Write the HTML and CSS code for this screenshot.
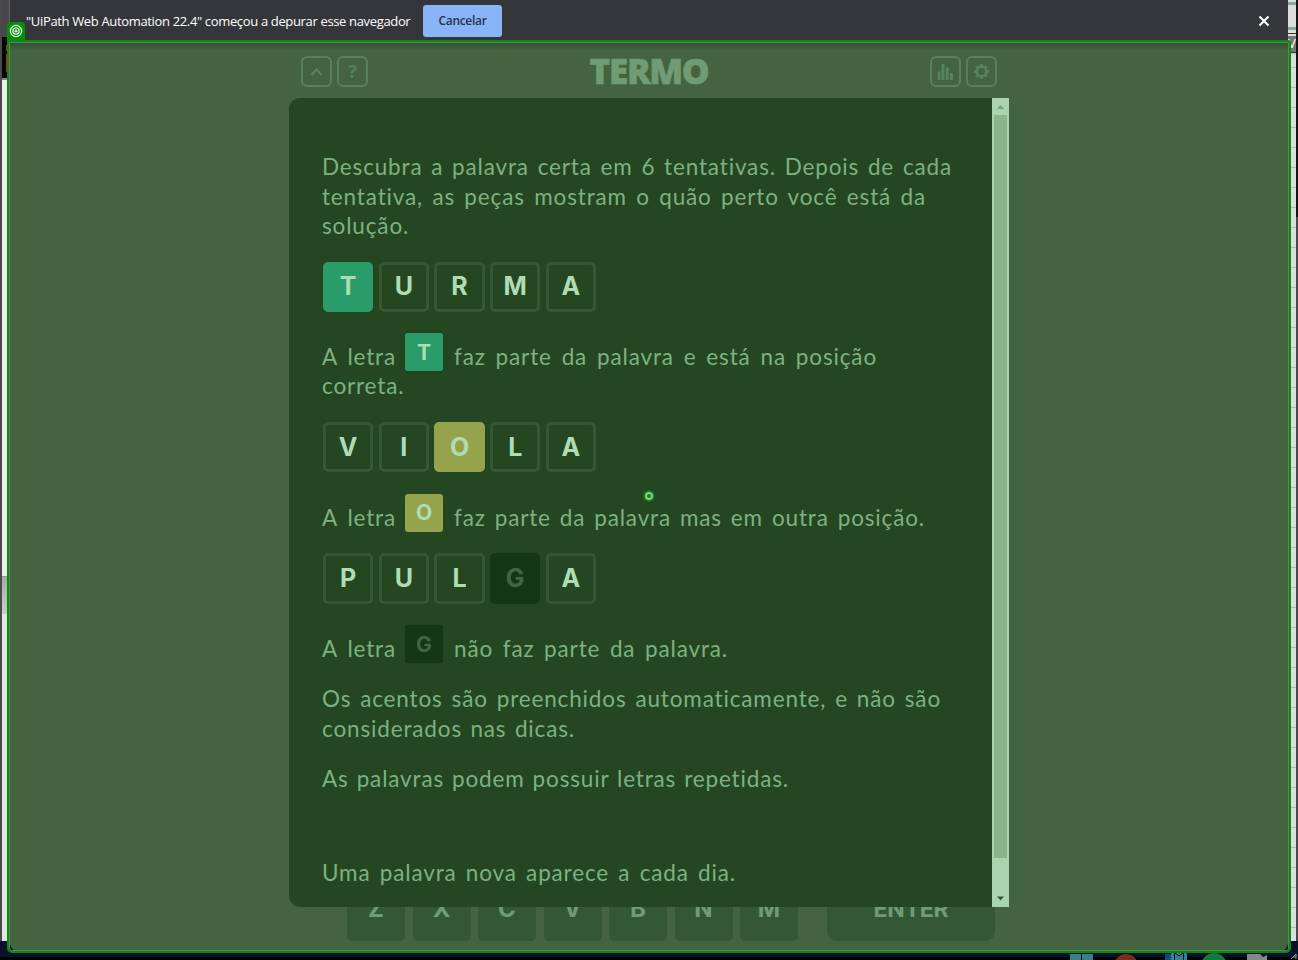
FILE: index.html
```
<!DOCTYPE html>
<html lang="pt-BR">
<head>
<meta charset="utf-8">
<title>Termo</title>
<link rel="stylesheet" href="styles.css">
</head>
<body>
<div class="desktop">
  <div class="middle">
    <div class="edge-left">
      <div class="el-top"></div><div class="el-dark"><i></i><i></i></div><div class="el-light"></div><div class="el-shade"></div><div class="el-rest"></div>
    </div>
    <main class="window">
      <div class="infobar">
        <span class="info-text">"UiPath Web Automation 22.4" começou a depurar esse navegador</span>
        <button class="cancel">Cancelar</button>
        <svg class="close" viewBox="0 0 12 12"><path d="M1.5 1.5l9 9M10.5 1.5l-9 9"/></svg>
      </div>
      <div class="app">
        <header class="header">
          <div class="tools">
            <span class="tool"><svg viewBox="0 0 31 31"><path class="line" d="M10.5 19l5-5.5 5 5.5"/></svg></span>
            <span class="tool">?</span>
          </div>
          <h1>TERMO</h1>
          <div class="tools">
            <span class="tool"><svg viewBox="0 0 31 31"><path class="bars" d="M9 24v-8.500M13 24v-16M17.300 24v-12.500M21.500 24v-7"/></svg></span>
            <span class="tool"><svg viewBox="0 0 31 31"><circle class="ring" cx="15.500" cy="15.500" r="4.700"/><path class="teeth" d="M15.500 8v3M15.500 20v3M8 15.500h3M20 15.500h3M10.200 10.200l2 2M18.800 18.800l2 2M20.800 10.200l-2 2M12.200 18.800l-2 2"/></svg></span>
          </div>
        </header>
        <div class="keyboard">
          <span class="key">Z</span><span class="key">X</span><span class="key">C</span><span class="key">V</span><span class="key">B</span><span class="key">N</span><span class="key">M</span><span class="key enter">ENTER</span>
        </div>
        <section class="modal">
          <div class="help">
            <p><span class="line l1">Descubra a palavra certa em 6 tentativas. Depois de cada</span><span class="line l2">tentativa, as peças mostram o quão perto você está da</span><span class="line l3">solução.</span></p>
            <div class="word"><b class="right">T</b><b>U</b><b>R</b><b>M</b><b>A</b></div>
            <div>
              <div class="mixed"><span class="line la">A letra</span><b class="mini right">T</b><span class="line l4">faz parte da palavra e está na posição</span></div>
              <span class="line l5">correta.</span>
            </div>
            <div class="word"><b>V</b><b class="bar-i">I</b><b class="place">O</b><b>L</b><b>A</b></div>
            <div class="mixed"><span class="line la">A letra</span><b class="mini place">O</b><span class="line l6">faz parte da palavra mas em outra posição.</span></div>
            <div class="word"><b>P</b><b>U</b><b>L</b><b class="wrong">G</b><b>A</b></div>
            <div class="mixed"><span class="line la">A letra</span><b class="mini wrong">G</b><span class="line l7">não faz parte da palavra.</span></div>
            <p><span class="line l8">Os acentos são preenchidos automaticamente, e não são</span><span class="line l9">considerados nas dicas.</span></p>
            <p><span class="line l10">As palavras podem possuir letras repetidas.</span></p>
            <p class="last"><span class="line l11">Uma palavra nova aparece a cada dia.</span></p>
          </div>
          <div class="scrollbar">
            <svg class="arrow up" viewBox="0 0 17 17"><path d="M5 11l3.500-4 3.500 4z"/></svg>
            <div class="thumb"></div>
            <svg class="arrow" viewBox="0 0 17 17"><path d="M5 6.500h7l-3.500 4z"/></svg>
          </div>
        </section>
      </div>
    </main>
    <div class="edge-right"><div class="sheet"><div class="sheet-top"><span>V</span></div><div class="sheet-rows"></div></div><div class="frame"></div></div>
  </div>
  <div class="taskbar">
    <svg viewBox="0 0 1298 9"><path fill="#3d7d8a" d="M1070 3h11v6h-11zM1082 3h11v6h-11z"/><circle cx="1126" cy="15" r="12" fill="#7d2b22"/><path fill="#104a78" d="M1165 3h8v6h-8z"/><path fill="#388099" d="M1173 0h12l2 3v6h-16v-6z"/><path fill="none" stroke="#071018" d="M1174.500 9v-8h9v8M1175 2l4 3 4-3"/><circle cx="1214" cy="15" r="13" fill="#147a39"/><path fill="#85858a" d="M1247 3h13l3 3 4-2v5h-20z"/><path fill="none" stroke="#999" d="M1291 8l5-5v5M1293 6h3"/></svg>
  </div>
</div>
<div class="highlight"></div>
<div class="badge"><svg viewBox="0 0 18 18"><circle cx="9" cy="9" r="5.600"/><circle cx="9" cy="9" r="3.100"/><circle cx="9" cy="9" r=".8"/></svg></div>
<svg class="target" viewBox="0 0 14 14"><path fill="#078c0b" d="M7 .5l2 2h2.500v2.500l2 2-2 2v2.500H9l-2 2-2-2H2.500V9l-2-2 2-2V2.500H5z"/><circle cx="7" cy="7" r="3" fill="#078c0b" stroke="#a3b9a2" stroke-width="2"/></svg>
</body>
</html>
```
FILE: styles.css
```
* { box-sizing: border-box; }
body { margin: 0; width: 1298px; height: 960px; overflow: hidden; position: relative; background: #030713; font-family: "Open Sans", sans-serif; }
.desktop { height: 960px; display: flex; flex-direction: column; }
.middle { height: 951px; display: flex; background: #0a122a; }
.edge-left { width: 10px; height: 941px; border-left: 2px solid #4a4a4c; background: #e8e8e8; }
.el-top { height: 37px; background: #484848; border-right: 1px solid #606060; }
.el-dark { height: 43px; background: #020807; border-bottom: 2px solid #858585; padding: 8px 0 0 4px; }
.el-dark i { display: block; height: 6px; margin-bottom: 3px; background: #d8170b; }
.el-dark i + i { height: 18px; }
.el-light { height: 496px; background: #eee; }
.el-shade { height: 38px; border-top: 1px solid #999; background: linear-gradient(#aaa, #ccc); }
.el-rest { height: 327px; background: #e4e4e4; }
.window { width: 1278px; height: 951px; display: flex; flex-direction: column; }
.infobar { height: 42px; padding: 0 18px 0 16px; display: flex; align-items: center; background: #35363a; color: #fff; }
.info-text { width: 385px; font-size: 13px; letter-spacing: -0.345px; white-space: nowrap; }
.cancel { width: 79px; height: 32px; margin-left: 12px; padding: 0 0 1px; border: 0; border-radius: 3px; background: #8ab4f8; color: #27334a; font: 600 12px "Open Sans", sans-serif; letter-spacing: -.3px; }
.close { width: 12px; height: 12px; margin-left: auto; }
.close path { fill: none; stroke: #fff; stroke-width: 2; }
.app { height: 909px; position: relative; display: flex; flex-direction: column; justify-content: space-between; align-items: center; padding-bottom: 10px; border-radius: 0 0 8px 8px; background: linear-gradient(#2f4d2e, #43643f 8px); }
.header { width: 696px; padding-top: 14px; display: flex; justify-content: space-between; align-items: flex-start; }
.tools { display: flex; gap: 5px; }
.tool { width: 31px; height: 31px; display: flex; align-items: center; justify-content: center; border: 2px solid #57815a; border-radius: 6px; color: #57815a; font-size: 18px; font-weight: 700; line-height: 24px; padding-bottom: 1px; }
.tool svg { width: 31px; height: 31px; flex: none; fill: none; stroke: #57815a; }
.tool .line { stroke-width: 2.5; }
.tool .bars, .tool .teeth { stroke-width: 3; }
.tool .ring { stroke-width: 2.5; }
h1 { margin: -1px 0 0; color: #6f9c75; font: 800 35px/31px "Open Sans", sans-serif; letter-spacing: -1.3px; -webkit-text-stroke: .6px #6f9c75; }
.keyboard { width: 648px; margin-left: 44px; display: flex; gap: 7.500px; }
.key { width: 58px; height: 58px; display: flex; align-items: center; justify-content: center; padding-bottom: 7px; border-radius: 5px; background: #355834; color: #6f9c75; font: 700 24px Inter, sans-serif; }
.enter { width: 168px; margin-left: auto; border-radius: 10px; font-size: 23px; letter-spacing: -.2px; }
.modal { position: absolute; left: 279px; top: 56px; width: 720px; height: 809px; display: flex; border-radius: 11px 0 0 11px; overflow: hidden; background: #244722; }
.help { width: 703px; padding: 54.200px 0 0 33px; display: flex; flex-direction: column; gap: 21.4px; color: #7eb181; font: 22.500px/29.33px Lato, sans-serif; letter-spacing: .85px; }
.help p { margin: 0; }
.line { display: block; white-space: nowrap; text-align: justify; text-align-last: justify; }
.l1 { width: 630px; } .l2 { width: 604px; } .l3 { width: 85px; }
.l4 { width: 423px; } .l5 { width: 81px; } .l6 { width: 471px; } .l7 { width: 274px; }
.l8 { width: 619px; } .l9 { width: 253px; } .l10 { width: 467px; } .l11 { width: 414px; } .la { width: 74px; }
.help .last { margin-top: 42.500px; }
.word { display: flex; gap: 5.400px; padding-left: 1px; }
.word b { width: 50.300px; height: 50.400px; display: flex; align-items: center; justify-content: center; border: 3px solid #355834; border-radius: 5px; color: #b0dcb4; font: 700 25px Inter, sans-serif; letter-spacing: 0; padding-bottom: 1px; }
.mixed { display: flex; align-items: flex-end; }
.mini { width: 38px; height: 38px; margin: 0 11px 0 9px; display: flex; align-items: center; justify-content: center; border-radius: 3px; color: #b0dcb4; font: 700 21px Inter, sans-serif; letter-spacing: 0; }
.help .right { background: #2a9c69; border-color: #2a9c69; }
.help .place { background: #96a34d; border-color: #96a34d; }
.help .wrong { background: #143813; border-color: #143813; color: #42683f; }
.scrollbar { width: 17px; background: #aad4ab; display: flex; flex-direction: column; }
.arrow { width: 17px; height: 17px; margin-top: auto; fill: #315a32; }
.arrow.up { margin: 0; fill: #789f79; }
.thumb { height: 743px; margin: 0 2px; background: #8ab58b; }
.edge-right { width: 10px; height: 941px; display: flex; }
.sheet { width: 8px; background: #dedede; }
.sheet-top { height: 55px; padding-top: 33px; background: linear-gradient(#ddd 2px, #80ad96 2px 5px, #ddd 5px 27px, #80ad96 27px 30px, #ddd 30px 33px, #333 33px 34px, #ddd 34px 36px, #777 36px 52px, #333 52px 53px, #ccc 53px); overflow: hidden; color: #fff; font-size: 13px; line-height: 20px; }
.sheet-rows { height: 886px; background: repeating-linear-gradient(#dedede 0 12px, #b8b8b8 12px 13px, #dedede 13px 20px); }
.frame { width: 2px; background: linear-gradient(#151515 217px, #49494c 217px); }
.taskbar { height: 9px; background: linear-gradient(#0a122a 6px, #010205 6px); }
.taskbar svg { display: block; width: 1298px; height: 9px; }
.highlight { position: absolute; left: 7px; top: 40px; width: 1284px; height: 913px; border: 2px solid #058c08; border-radius: 2px 3px 5px 5px; box-shadow: inset 0 0 0 1px #608264, inset 0 2px 0 #31513a; }
.badge { position: absolute; left: 7px; top: 22px; width: 18px; height: 19px; border-radius: 4px 4px 0 0; background: #058c08; }
.badge svg { display: block; width: 18px; height: 18px; fill: none; stroke: #d9f4d7; stroke-width: 1.3; }
.target { position: absolute; left: 642px; top: 489px; width: 14px; height: 14px; }
```
